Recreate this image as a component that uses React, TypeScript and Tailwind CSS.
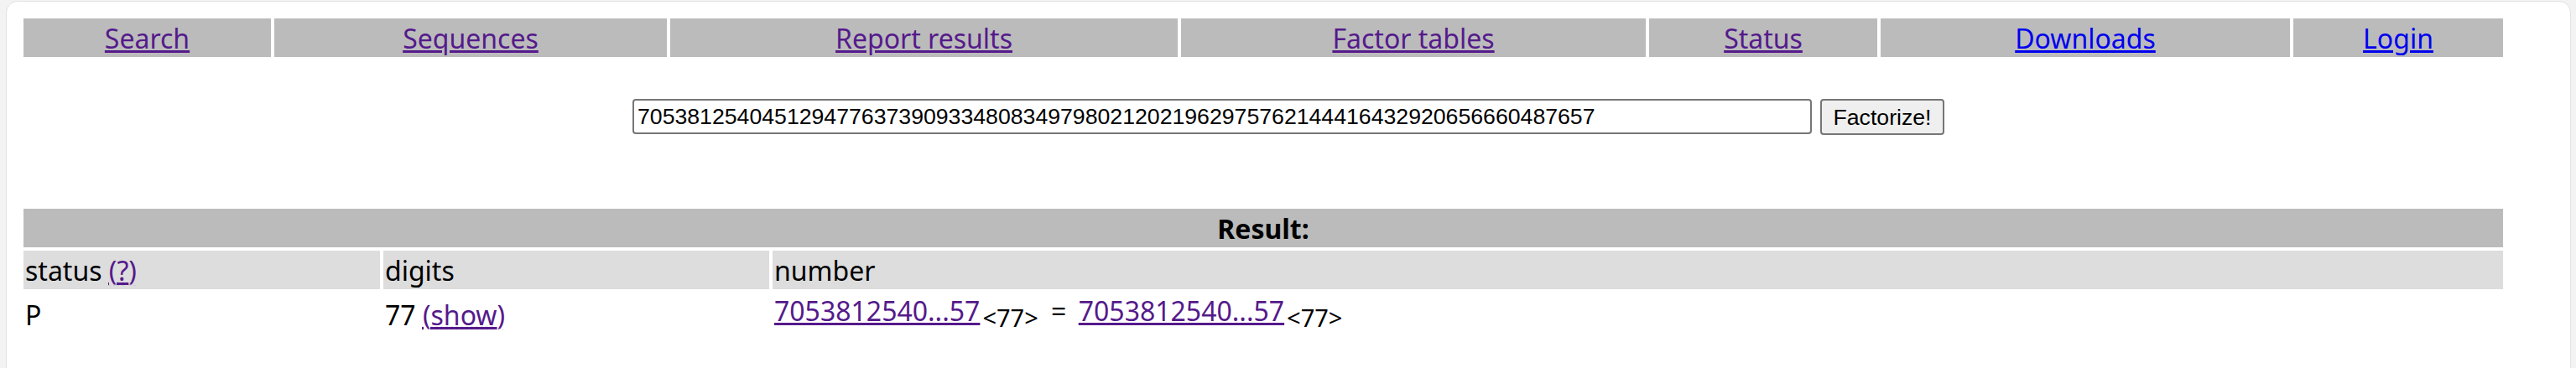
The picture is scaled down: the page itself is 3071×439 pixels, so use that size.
import React from "react";

const PURPLE = "text-[#551a8b]";
const BLUE = "text-[#0000ee]";

const navItems = [
  { label: "Search", w: "w-[295px]", color: PURPLE },
  { label: "Sequences", w: "w-[468px]", color: PURPLE },
  { label: "Report results", w: "w-[605px]", color: PURPLE },
  { label: "Factor tables", w: "w-[554px]", color: PURPLE },
  { label: "Status", w: "w-[272px]", color: PURPLE },
  { label: "Downloads", w: "w-[488px]", color: BLUE },
  { label: "Login", w: "w-[250px]", color: BLUE },
];

const NUMBER =
  "70538125404512947763739093348083497980212021962975762144416432920656660487657";

export default function App() {
  return (
    <div className="h-[439px] w-[3071px] overflow-hidden bg-[#f3f3f3] pl-[7px] pr-[6px] pt-[1px] font-['Noto_Sans',sans-serif] text-[32px] text-black">
      <div className="h-[460px] rounded-t-[14px] border border-[#e2e2e2] bg-white px-[20px] pt-[20px]">
        {/* navigation */}
        <div className="flex gap-[4px]">
          {navItems.map((n) => (
            <div
              key={n.label}
              className={`${n.w} flex h-[46px] items-center justify-center bg-[#bbbbbb] pt-[2px]`}
            >
              <a href="#" className={`${n.color} underline`}>
                {n.label}
              </a>
            </div>
          ))}
        </div>

        {/* form */}
        <div className="mt-[50px] flex items-start justify-center gap-[10px]">
          <input
            readOnly
            value={NUMBER}
            className="h-[42px] w-[1406px] rounded-[4px] border-2 border-[#767676] bg-white px-[4px] font-['Liberation_Sans',Arial,sans-serif] text-[26.67px] text-black outline-none"
          />
          <button className="h-[43px] w-[148px] rounded-[4px] border-2 border-[#767676] bg-[#efefef] font-['Liberation_Sans',Arial,sans-serif] text-[26.67px] text-black">
            Factorize!
          </button>
        </div>

        {/* result table */}
        <div className="mt-[88px] flex w-[2956px] flex-col gap-[4px]">
          <div className="flex h-[46px] items-center justify-center bg-[#bbbbbb] pt-[1px] font-bold">
            Result:
          </div>
          <div className="flex gap-[4px]">
            <div className="flex h-[46px] w-[425px] items-center bg-[#dddddd] px-[2px] pt-[1px]">
              status&nbsp;
              <a href="#" className={`${PURPLE} underline decoration-dotted`}>
                (<span className="underline decoration-solid">?</span>)
              </a>
            </div>
            <div className="flex h-[46px] w-[460px] items-center bg-[#dddddd] px-[2px] pt-[1px]">
              digits
            </div>
            <div className="flex h-[46px] w-[2063px] items-center bg-[#dddddd] px-[2px] pt-[1px]">
              number
            </div>
          </div>
          <div className="flex gap-[4px] leading-[44px]">
            <div className="h-[53px] w-[425px] px-[2px] pt-[5px]">P</div>
            <div className="h-[53px] w-[460px] px-[2px] pt-[5px]">
              77{" "}
              <a href="#" className={`${PURPLE} underline decoration-dotted`}>
                (<span className="underline decoration-solid">show</span>)
              </a>
            </div>
            <div className="h-[53px] w-[2063px] whitespace-nowrap px-[2px] pt-[0px]">
              <a href="#" className={`${PURPLE} underline`}>
                7053812540...57
              </a>
              <sub className="ml-[3px] text-[29px]">&lt;77&gt;</sub>
              {" "}
              <span className="ml-[7px] mr-[6px]">=</span>
              {" "}
              <a href="#" className={`${PURPLE} underline`}>
                7053812540...57
              </a>
              <sub className="ml-[3px] text-[29px]">&lt;77&gt;</sub>
            </div>
          </div>
        </div>
      </div>
    </div>
  );
}
